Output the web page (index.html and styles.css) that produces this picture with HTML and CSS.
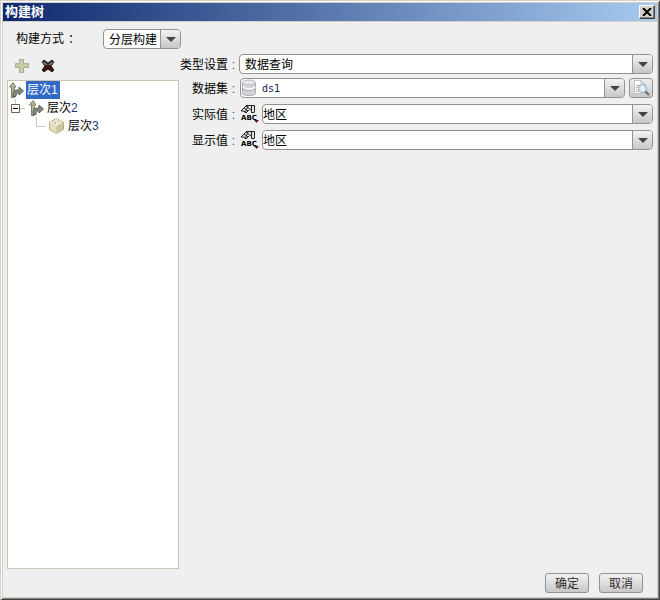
FILE: index.html
```html
<!DOCTYPE html>
<html lang="zh-CN">
<head>
<meta charset="utf-8">
<title>构建树</title>
<link rel="stylesheet" href="styles.css">
</head>
<body>
<svg class="defs" aria-hidden="true">
  <symbol id="branch" viewBox="0 0 15 16">
    <path d="M2.500 15.500V5H.5L4 .5 7 5H5.500V15.500Z" fill="#b3b592" stroke="#7d806a"/>
    <path d="M4 14.500V12Q4 8 8 8H10V5L14.500 9 10 13V11H8Q7 11 7 14.500Z" fill="#7f8a7c" stroke="#5d675c"/>
  </symbol>
  <symbol id="abc" viewBox="0 0 20 20">
    <path d="M2 7 7 1.500H15.500V8H12.500L10.500 6 7 9.500Z" fill="#e6e6e6"/>
    <path d="M7 1.500H15.500V8.500M12.500 2V8.500H15M7 2 12 6M7 2 2 7M5 4 9 7M9 2 6 9M2 7H5L7 9 10 6" fill="none" stroke="#222"/>
    <path d="M15 16H20L17.500 19Z" fill="#5b1a1a"/>
  </symbol>
</svg>
<main class="dialog">
  <header class="titlebar">
    <h1>构建树</h1>
    <button class="close" type="button" aria-label="关闭"><svg width="10" height="8" viewBox="0 0 10 8"><path d="M1 0 9 8M9 0 1 8" stroke="#000" stroke-width="2"/></svg></button>
  </header>
  <div class="mode">
    <label for="mode">构建方式<i>：</i></label>
    <span class="combo combo-mode"><select id="mode"><option>分层构建</option></select></span>
  </div>
  <div class="content">
    <section class="side">
      <div class="tools">
        <button type="button" aria-label="添加"><svg width="14" height="14" viewBox="0 0 14 14"><path d="M4.500 .5H8.500V4.500H13.500V8.500H8.500V13.500H4.500V8.500H.5V4.500H4.500Z" fill="#c9cc9f" stroke="#a9ab9c"/></svg></button>
        <button type="button" aria-label="删除"><svg width="14" height="14" viewBox="0 0 14 14"><path d="M1 3 3 1 7 4 11 1 13 3 10 7 13 11 11 13 7 10 3 13 1 11 4 7Z" fill="#3b1512" stroke="#2b1b19"/><path d="M2 3 6 6M12 3 8 6" stroke="#69756b" stroke-width="2"/></svg></button>
      </div>
      <ul class="tree">
        <li><svg width="15" height="16"><use href="#branch"/></svg><span class="name selected">层次1</span></li>
        <li><svg width="20" height="18" viewBox="0 0 20 18"><path d="M6.500 0V5M11 9.500H16" stroke="#c9c6bd"/><path d="M2.500 5.500H10.500V13.500H2.500Z" fill="#fff" stroke="#72634e"/><path d="M4 9.500H9" stroke="#000"/></svg><svg width="15" height="16"><use href="#branch"/></svg><span class="name">层次<b>2</b></span></li>
        <li class="leaf"><svg width="12" height="18" viewBox="0 0 12 18"><path d="M.5 0V9.500H10" fill="none" stroke="#c9c6bd"/></svg><svg width="17" height="16" viewBox="0 0 17 16"><path d="M8.500 .5 15.500 4V11.500L8.500 15.500 1.500 11.500V4Z" fill="#e3dcbe" stroke="#b6ad8e"/><path d="M2 4 8.500 1 15 4 8.500 8Z" fill="#f2eedc"/><path d="M8.500 8V15L15 11.500V4Z" fill="#cdc4a0"/><path d="M5 3 8 5 6 6M9 3 11 4" fill="none" stroke="#b9ae87"/></svg><span class="name">层次<b>3</b></span></li>
      </ul>
    </section>
    <form class="form">
      <label for="type">类型设置<i>:</i></label>
      <span class="combo"><select id="type"><option>数据查询</option></select></span>
      <label for="data">数据集<i>:</i></label>
      <div class="line">
        <span class="combo combo-data"><svg width="16" height="18" viewBox="0 0 16 18"><path d="M1.500 3V14C1.500 17.500 14.500 17.500 14.500 14V3" fill="#d3d5d9" stroke="#aaadb2"/><ellipse cx="8" cy="3.500" rx="6.500" ry="2.500" fill="#e6e7ea" stroke="#b4b7bb"/><path d="M2 8C4 11 12 11 14 8" fill="none" stroke="#f7f7f7" stroke-width="2"/><path d="M2 9.500C4 12.500 12 12.500 14 9.500" fill="none" stroke="#a5a9af"/></svg><select id="data"><option>ds1</option></select></span>
        <button class="preview" type="button" aria-label="预览"><svg width="17" height="18" viewBox="0 0 17 18"><path d="M1.500 1.500H8L11.500 5V14.500H1.500Z" fill="#fff" stroke="#c4c4c4"/><path d="M8 1.500V5H11.500M3 6.500H6M3 8.500H5M3 10.500H5M3 12.500H6" fill="none" stroke="#b5b5b5"/><circle cx="9.500" cy="9.500" r="4" fill="#dceaf5" stroke="#88a9c6"/><path d="M9.500 6V13" stroke="#fff"/><path d="M12.500 12.500 16 16" stroke="#5b6b60" stroke-width="2"/></svg></button>
      </div>
      <label for="real">实际值<i>:</i></label>
      <div class="line value"><button class="kind" type="button" aria-label="字段类型"><svg width="20" height="20"><use href="#abc"/></svg><span>ABC</span></button><span class="combo"><select id="real"><option>地区</option></select></span></div>
      <label for="show">显示值<i>:</i></label>
      <div class="line value"><button class="kind" type="button" aria-label="字段类型"><svg width="20" height="20"><use href="#abc"/></svg><span>ABC</span></button><span class="combo"><select id="show"><option>地区</option></select></span></div>
    </form>
  </div>
  <footer class="actions">
    <button type="button">确定</button>
    <button type="button">取消</button>
  </footer>
</main>
</body>
</html>
```
FILE: styles.css
```css
* { box-sizing: border-box; }
body {
  margin: 0;
  min-height: 100vh;
  display: flex;
  padding: 2px 1px 1px 2px;
  background: #fff;
  box-shadow: inset 1px 1px #d4d0c8, inset -1px -1px #444;
  font: 12px/16px "Liberation Sans", "Noto Sans CJK SC", sans-serif;
  color: #000;
}
button, select { font: inherit; color: inherit; margin: 0; padding: 0; }
svg { display: block; flex: none; }
.defs { position: absolute; width: 0; height: 0; }
.dialog {
  flex: 1;
  display: flex;
  flex-direction: column;
  background: #efefef;
  border: 1px solid #d4d0c8;
  border-right-color: #808080;
  border-bottom-color: #808080;
  box-shadow: inset -1px -1px #d4d0c8;
}
.titlebar {
  display: flex;
  align-items: center;
  justify-content: space-between;
  height: 19px;
  margin-right: 1px;
  padding: 0 2px;
  border-bottom: 1px solid #d4d0c8;
  background: linear-gradient(90deg, #0f286d, #a6caf0);
}
.titlebar h1 { margin: 0; font-size: 13px; line-height: 20px; color: #fff; }
.close {
  display: grid;
  place-items: center;
  width: 16px;
  height: 14px;
  background: #d4d0c8;
  border: 1px solid;
  border-color: #fff #404040 #404040 #fff;
  box-shadow: inset -1px -1px #808080;
}
.mode {
  display: flex;
  align-items: center;
  height: 20px;
  margin: 7px 0 5px;
  padding-left: 13px;
}
.mode label { width: 87px; }
.mode i { margin-left: 4px; font-style: normal; }
.combo {
  position: relative;
  display: flex;
  align-items: center;
  flex: 1;
  min-width: 0;
  height: 20px;
  background: #fff;
  border: 1px solid #929292;
  border-radius: 4px;
  overflow: hidden;
}
.combo-mode { flex: none; width: 78px; }
.combo select {
  appearance: none;
  flex: 1;
  min-width: 0;
  height: 18px;
  padding: 2px 18px 0 5px;
  border: 0;
  background: none;
}
.combo::after {
  content: "";
  position: absolute;
  top: 0;
  right: 0;
  width: 19px;
  height: 100%;
  border-left: 1px solid #929292;
  background: linear-gradient(#f3f3f3, #c6c6c6);
  pointer-events: none;
}
.combo::before {
  content: "";
  position: absolute;
  z-index: 1;
  top: 7px;
  right: 4px;
  border: 5px solid transparent;
  border-top-color: #444;
  border-bottom: 0;
  pointer-events: none;
}
.content { flex: 1; display: flex; padding: 0 5px 0 4px; }
.side { width: 172px; display: flex; flex-direction: column; }
.tools { display: flex; align-items: center; gap: 12px; height: 26px; padding: 0 0 2px 8px; }
.tools button { border: 0; background: none; }
.tree {
  flex: 1;
  margin: 0;
  padding: 0 0 0 1px;
  list-style: none;
  background: #fff;
  border: 1px solid #c8c5b3;
}
.tree li { display: flex; align-items: center; height: 18px; }
.leaf { padding-left: 27px; }
.name { margin-left: 2px; padding: 0 1px; line-height: 18px; }
.name b { font-weight: normal; color: #173579; }
.selected { padding-right: 2px; background: #316ac5; color: #fff; }
/* The first row is closer to its neighbour; labels sit a pixel below the field centre. */
.form {
  flex: 1;
  display: grid;
  grid-template-columns: 56px 1fr;
  grid-template-rows: 18px 20px 20px 20px;
  gap: 6px 4px;
  align-content: start;
  align-items: start;
}
.form label { text-align: right; white-space: nowrap; line-height: 22px; }
.form i { display: inline-block; width: 7px; font-style: normal; color: #334a70; }
.line { display: flex; gap: 4px; }
.value { gap: 2px; }
.value select { padding-left: 0; }
.combo-data { margin-left: 1px; }
.combo-data select { font-family: "DejaVu Sans Mono", monospace; font-size: 10px; color: #10254f; }
.preview {
  display: grid;
  place-items: center;
  width: 24px;
  height: 20px;
  border: 1px solid #929292;
  border-radius: 3px;
  background: linear-gradient(#eee, #c9c9c9);
}
.kind { position: relative; width: 21px; height: 20px; border: 0; background: none; }
.kind span { position: absolute; left: 2px; bottom: 2px; font: bold 7px/8px "DejaVu Sans", sans-serif; }
.actions { display: flex; justify-content: flex-end; gap: 10px; padding: 4px 15px 5px 0; }
.actions button {
  width: 44px;
  height: 20px;
  padding-top: 2px;
  border: 1px solid #8e949b;
  border-radius: 3px;
  background: linear-gradient(#f2f2f2, #c8c8c8);
  color: #332a2a;
  line-height: 16px;
}
```
